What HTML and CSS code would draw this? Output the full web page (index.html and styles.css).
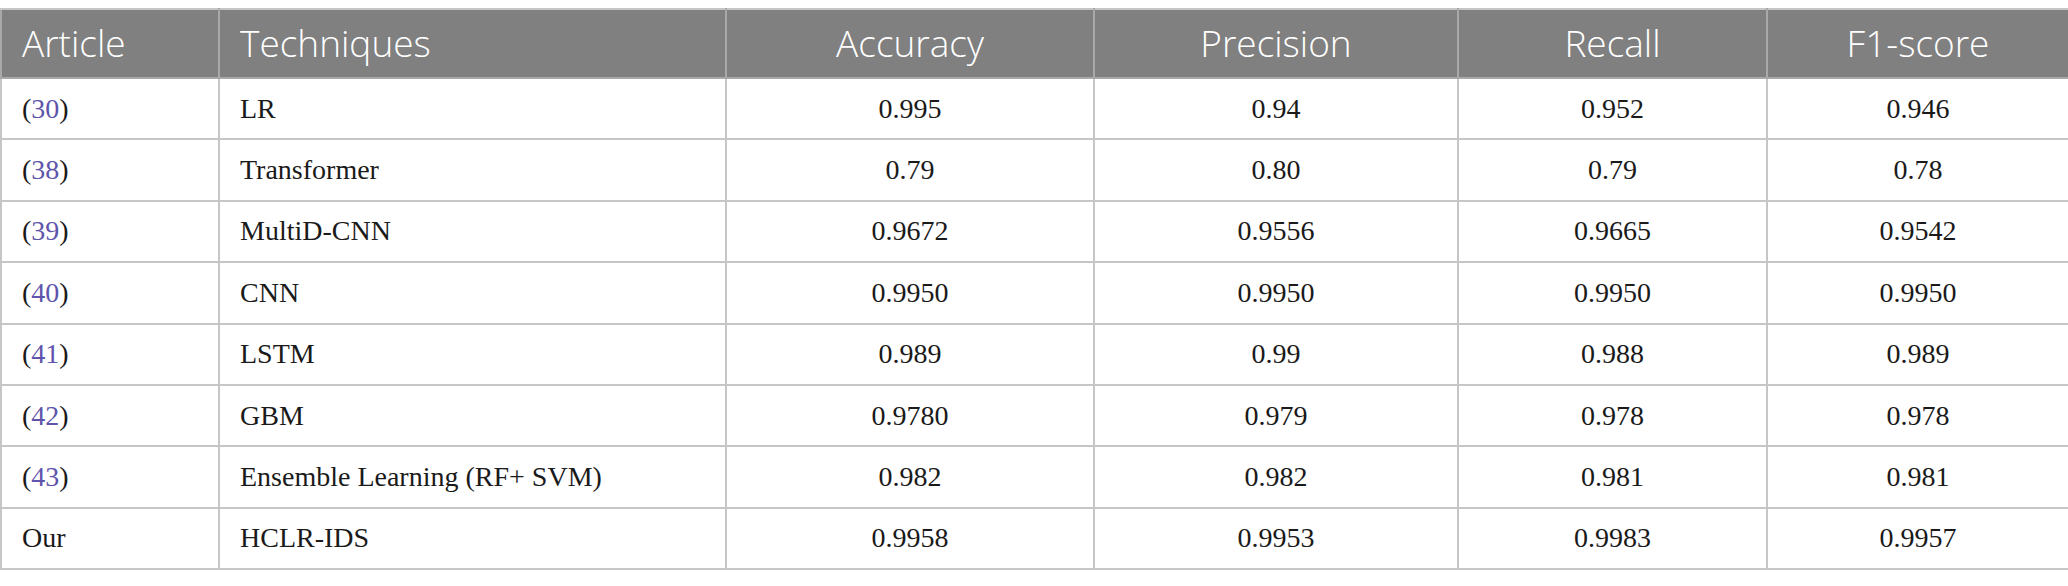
FILE: index.html
```html
<!DOCTYPE html>
<html>
<head>
<meta charset="utf-8">
<link rel="stylesheet" href="styles.css">
</head>
<body>
<table class="results">
  <colgroup>
    <col class="c-article">
    <col class="c-tech">
    <col class="c-acc">
    <col class="c-prec">
    <col class="c-rec">
    <col class="c-f1">
  </colgroup>
  <thead>
    <tr class="head-row">
      <th class="left">Article</th>
      <th class="left">Techniques</th>
      <th>Accuracy</th>
      <th>Precision</th>
      <th>Recall</th>
      <th>F1-score</th>
    </tr>
  </thead>
  <tbody>
    <tr><td class="left">(<a class="ref">30</a>)</td><td class="left">LR</td><td>0.995</td><td>0.94</td><td>0.952</td><td>0.946</td></tr>
    <tr><td class="left">(<a class="ref">38</a>)</td><td class="left">Transformer</td><td>0.79</td><td>0.80</td><td>0.79</td><td>0.78</td></tr>
    <tr><td class="left">(<a class="ref">39</a>)</td><td class="left">MultiD-CNN</td><td>0.9672</td><td>0.9556</td><td>0.9665</td><td>0.9542</td></tr>
    <tr><td class="left">(<a class="ref">40</a>)</td><td class="left">CNN</td><td>0.9950</td><td>0.9950</td><td>0.9950</td><td>0.9950</td></tr>
    <tr><td class="left">(<a class="ref">41</a>)</td><td class="left">LSTM</td><td>0.989</td><td>0.99</td><td>0.988</td><td>0.989</td></tr>
    <tr><td class="left">(<a class="ref">42</a>)</td><td class="left">GBM</td><td>0.9780</td><td>0.979</td><td>0.978</td><td>0.978</td></tr>
    <tr><td class="left">(<a class="ref">43</a>)</td><td class="left">Ensemble Learning (RF+ SVM)</td><td>0.982</td><td>0.982</td><td>0.981</td><td>0.981</td></tr>
    <tr><td class="left">Our</td><td class="left">HCLR-IDS</td><td>0.9958</td><td>0.9953</td><td>0.9983</td><td>0.9957</td></tr>
  </tbody>
</table>
</body>
</html>
```

FILE: styles.css
```css
html, body {
  margin: 0;
  padding: 0;
  background: #ffffff;
}
body {
  padding-top: 8px;
}
.results {
  width: 2068px;
  border-collapse: collapse;
  table-layout: fixed;
}
.c-article { width: 218px; }
.c-tech { width: 507px; }
.c-acc { width: 368px; }
.c-prec { width: 364px; }
.c-rec { width: 309px; }
.c-f1 { width: 302px; }

.results th,
.results td {
  border: 2px solid #c6c6c6;
  text-align: center;
  vertical-align: middle;
  padding: 0;
}
.head-row {
  height: 69px;
  background: #808080;
}
.results th {
  font-family: "Open Sans", "Noto Sans", sans-serif;
  font-weight: 350;
  font-size: 37px;
  color: #ffffff;
  border-color: #a9a9a9;
  border-top-color: #c6c6c6;
  line-height: 1;
  padding-bottom: 2px;
}
.results tbody tr {
  height: 61.4px;
}
.results td {
  font-family: "Liberation Serif", "Times New Roman", serif;
  font-size: 28px;
  color: #1a1a1a;
  line-height: 1;
}
.results .left {
  text-align: left;
  padding-left: 20px;
}
.ref {
  color: #5e55ab;
  text-decoration: none;
}
```
